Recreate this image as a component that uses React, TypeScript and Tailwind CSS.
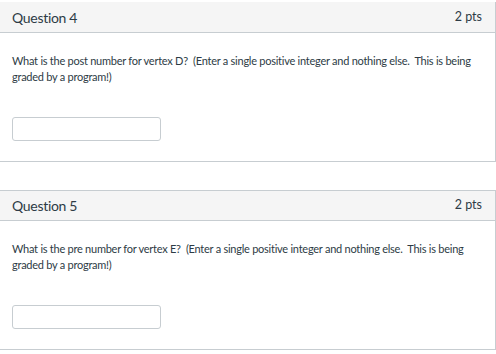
import React from "react";

function Card({ title, text, first }: { title: string; text: string; first?: boolean }) {
  return (
    <div
      className={
        "border-r border-b border-[#c7cdd1] bg-white " +
        (first ? "mt-[2px]" : "border-t mt-[28px]")
      }
    >
      <div
        className={
          "flex items-center justify-between bg-[#f5f5f5] border-b border-[#c7cdd1] pl-[12px] pr-[13px] " +
          (first ? "h-[31px]" : "h-[30px]")
        }
      >
        <span className="text-[14px] font-normal text-[#2d3b45] tracking-[-0.3px]">{title}</span>
        <span className="text-[12.5px] font-normal text-[#2d3b45]">2 pts</span>
      </div>
      <div className="pl-[12px] pr-[6px] pt-[20px] pb-[20px]">
        <p className="text-[11px] leading-[15.5px] text-[#2d3b45] tracking-[-0.25px] whitespace-pre-wrap">
          {text}
        </p>
        <div className="mt-[33px] w-[149px] h-[24px] rounded-[3px] border border-[#c7cdd1] bg-white" />
      </div>
    </div>
  );
}

export default function App() {
  return (
    <div className="w-[496px] h-[354px] bg-white overflow-hidden" style={{ fontFamily: "Lato, 'Noto Sans', sans-serif" }}>
      <Card
        first
        title="Question 4"
        text={"What is the post number for vertex D?  (Enter a single positive integer and nothing else.  This is being graded by a program!)"}
      />
      <Card
        title="Question 5"
        text={"What is the pre number for vertex E?  (Enter a single positive integer and nothing else.  This is being graded by a program!)"}
      />
    </div>
  );
}
